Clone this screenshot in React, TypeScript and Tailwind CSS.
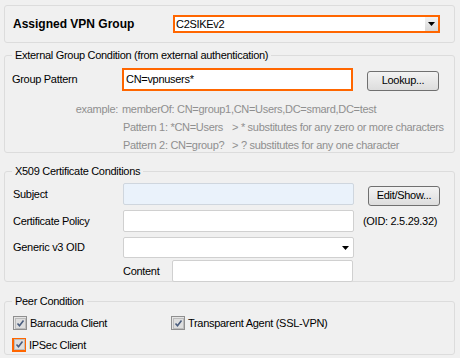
import React from "react";

const font = { fontFamily: '"Liberation Sans", Arial, sans-serif' };

const Arrow = () => (
  <svg width="7" height="4" viewBox="0 0 7 4" className="block">
    <path d="M0 0h7L3.5 4z" fill="#000" />
  </svg>
);

const Check = ({ highlight }: { highlight?: boolean }) => (
  <span
    className={`flex items-center justify-center w-[14px] h-[14px] ${
      highlight ? "border-2 border-[#ff6600]" : "border border-[#8f8f8f]"
    } bg-[#e6e6e6]`}
  >
    <span className="flex items-center justify-center w-[11px] h-[11px] border border-[#bcbcbc] bg-[#dedede]">
      <svg width="9" height="9" viewBox="0 0 9 9">
        <path d="M1.5 4.5l2 2.2L7.5 1.5" stroke="#4a5d7e" strokeWidth="1.6" fill="none" />
      </svg>
    </span>
  </span>
);

const Button = ({ label }: { label: string }) => (
  <button className="w-[72px] h-[20px] rounded-[3px] border border-[#707070] bg-gradient-to-b from-[#f3f3f3] to-[#dddddd] text-[11px] text-black leading-none">
    {label}
  </button>
);

const GroupBox = ({
  title,
  className,
  children,
}: {
  title: string;
  className?: string;
  children: React.ReactNode;
}) => (
  <fieldset className={`border border-[#dcdcdc] rounded-[3px] ${className ?? ""}`}>
    <legend className="ml-[7px] px-[3px] text-[11px] leading-[13px] text-black">{title}</legend>
    {children}
  </fieldset>
);

export default function App() {
  return (
    <div
      className="w-[460px] h-[358px] bg-[#f0f0f0] overflow-hidden pl-[4px] pr-[5px] pt-[5px] whitespace-nowrap tracking-[-0.3px]"
      style={font}
    >
      {/* Assigned VPN group */}
      <div className="h-[38px] border border-[#dcdcdc] rounded-[3px] flex items-center">
        <span className="ml-[8px] w-[160px] text-[12px] font-bold text-black tracking-normal">Assigned VPN Group</span>
        <div className="w-[267px] h-[18px] border-2 border-[#ff6600] bg-white flex items-center justify-between">
          <span className="pl-[1px] text-[11px] text-black">C2SIKEv2</span>
          <span className="w-[13px] h-full bg-gradient-to-b from-[#f2f2f2] to-[#d8d8d8] flex items-center justify-center">
            <Arrow />
          </span>
        </div>
      </div>

      {/* External group condition */}
      <GroupBox title="External Group Condition (from external authentication)" className="mt-[6px] h-[104px]">
        <div className="flex items-center mt-[5px]">
          <span className="ml-[7px] w-[110px] text-[11px] text-black">Group Pattern</span>
          <div className="w-[231px] h-[23px] border-2 border-[#ff6600] bg-white flex items-center">
            <span className="pl-[2px] text-[11px] text-black">CN=vpnusers*</span>
          </div>
          <span className="ml-[14px]">
            <Button label="Lookup..." />
          </span>
        </div>
        <div className="mt-[9px] text-[11px] leading-[18px] text-[#8f8f8f]">
          <div className="flex">
            <span className="w-[117px] text-right pr-[4px]">example:</span>
            <span>memberOf: CN=group1,CN=Users,DC=smard,DC=test</span>
          </div>
          <div className="flex">
            <span className="ml-[118px] w-[109px]">Pattern 1: *CN=Users</span>
            <span>&gt; * substitutes for any zero or more characters</span>
          </div>
          <div className="flex">
            <span className="ml-[118px] w-[109px]">Pattern 2: CN=group?</span>
            <span>&gt; ? substitutes for any one character</span>
          </div>
        </div>
      </GroupBox>

      {/* X509 */}
      <GroupBox title="X509 Certificate Conditions" className="mt-[12px] h-[117px]">
        <div className="flex items-center mt-[4px]">
          <span className="ml-[8px] w-[110px] text-[11px] text-black">Subject</span>
          <div className="w-[231px] h-[22px] border border-[#cfd6de] rounded-[2px] bg-[#eaf2fb]" />
          <span className="ml-[14px]">
            <Button label="Edit/Show..." />
          </span>
        </div>
        <div className="flex items-center mt-[4px]">
          <span className="ml-[8px] w-[110px] text-[11px] text-black">Certificate Policy</span>
          <div className="w-[231px] h-[22px] border border-[#d0d0d0] rounded-[2px] bg-white" />
          <span className="ml-[9px] text-[11px] text-black">(OID: 2.5.29.32)</span>
        </div>
        <div className="flex items-center mt-[5px]">
          <span className="ml-[8px] w-[110px] text-[11px] text-black">Generic v3 OID</span>
          <div className="w-[231px] h-[21px] border border-[#d0d0d0] rounded-[2px] bg-white flex items-center justify-end pr-[4px]">
            <Arrow />
          </div>
        </div>
        <div className="flex items-center mt-[2px]">
          <span className="ml-[118px] w-[49px] text-[11px] text-black">Content</span>
          <div className="w-[181px] h-[22px] border border-[#d0d0d0] rounded-[2px] bg-white" />
        </div>
      </GroupBox>

      {/* Peer condition */}
      <GroupBox title="Peer Condition" className="mt-[13px] h-[60px]">
        <div className="flex items-center mt-[7px] ml-[8px]">
          <span className="flex items-center w-[158px]">
            <Check />
            <span className="ml-[3px] text-[11px] text-black">Barracuda Client</span>
          </span>
          <span className="flex items-center">
            <Check />
            <span className="ml-[3px] text-[11px] text-black">Transparent Agent (SSL-VPN)</span>
          </span>
        </div>
        <div className="flex items-center mt-[5px] ml-[7px]">
          <Check highlight />
          <span className="ml-[3px] text-[11px] text-black">IPSec Client</span>
        </div>
      </GroupBox>
    </div>
  );
}
